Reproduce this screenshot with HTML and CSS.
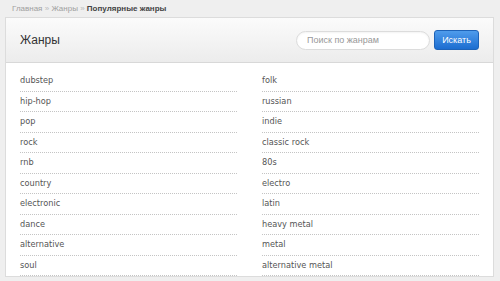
FILE: index.html
```html
<!DOCTYPE html>
<html>
<head>
<meta charset="utf-8">
<link rel="stylesheet" href="styles.css">
</head>
<body>
<div class="crumbs"><a>Главная</a> <span class="sep">»</span> <a>Жанры</a> <span class="sep">»</span> <b>Популярные жанры</b></div>
<div class="panel">
  <div class="head">
    <h1>Жанры</h1>
    <form class="search">
      <input type="text" placeholder="Поиск по жанрам">
      <button type="button">Искать</button>
    </form>
  </div>
  <div class="body">
    <ul class="col">
      <li>dubstep</li><li>hip-hop</li><li>pop</li><li>rock</li><li>rnb</li>
      <li>country</li><li>electronic</li><li>dance</li><li>alternative</li><li>soul</li>
    </ul>
    <ul class="col">
      <li>folk</li><li>russian</li><li>indie</li><li>classic rock</li><li>80s</li>
      <li>electro</li><li>latin</li><li>heavy metal</li><li>metal</li><li>alternative metal</li>
    </ul>
  </div>
</div>
</body>
</html>
```
FILE: styles.css
```css
html, body { margin: 0; padding: 0; }
body {
  background: #efefef;
  font-family: "Liberation Sans", Arial, sans-serif;
  width: 500px;
  height: 281px;
  overflow: hidden;
}
.crumbs {
  font-size: 8px;
  color: #aaa;
  padding: 4px 0 0 12px;
  height: 13px;
  line-height: 9px;
}
.crumbs a { color: #a0a0a0; }
.crumbs .sep { color: #bbb; }
.crumbs b { color: #444; font-weight: bold; }
.panel {
  margin: 0 6px 0 5px;
  border: 1px solid #dcdcdc;
  background: #fff;
}
.head {
  height: 44px;
  background: linear-gradient(#fbfbfb, #ececec);
  border-bottom: 1px solid #d8d8d8;
  display: flex;
  align-items: center;
  justify-content: space-between;
  padding: 0 14px 0 14px;
}
.head h1 {
  margin: 0;
  font-size: 12px;
  font-weight: normal;
  color: #333;
}
.search { display: flex; align-items: center; gap: 4px; margin: 0; }
.search input {
  width: 112px;
  height: 17px;
  border: 1px solid #dcdcdc;
  border-radius: 10px;
  padding: 0 10px;
  font-family: "Liberation Sans", Arial, sans-serif;
  font-size: 9px;
  color: #333;
  background: #fff;
  box-shadow: inset 0 1px 2px rgba(0,0,0,0.05);
  outline: none;
}
.search input::placeholder { color: #999; }
.search button {
  width: 45px;
  height: 20px;
  border: 1px solid #1e63b8;
  border-radius: 3px;
  background: linear-gradient(#4f9cec, #1c6dd0);
  color: #fff;
  font-family: "Liberation Sans", Arial, sans-serif;
  font-size: 9px;
  padding: 0;
}
.body {
  display: grid;
  grid-template-columns: 1fr 1fr;
  column-gap: 25px;
  padding: 8px 14px 0 14px;
}
.col { list-style: none; margin: 0; padding: 0; }
.col li {
  font-family: "DejaVu Sans", Verdana, sans-serif;
  font-size: 8.2px;
  color: #555;
  line-height: 19.5px;
  border-bottom: 1px dotted #c4c4c4;
}
```
